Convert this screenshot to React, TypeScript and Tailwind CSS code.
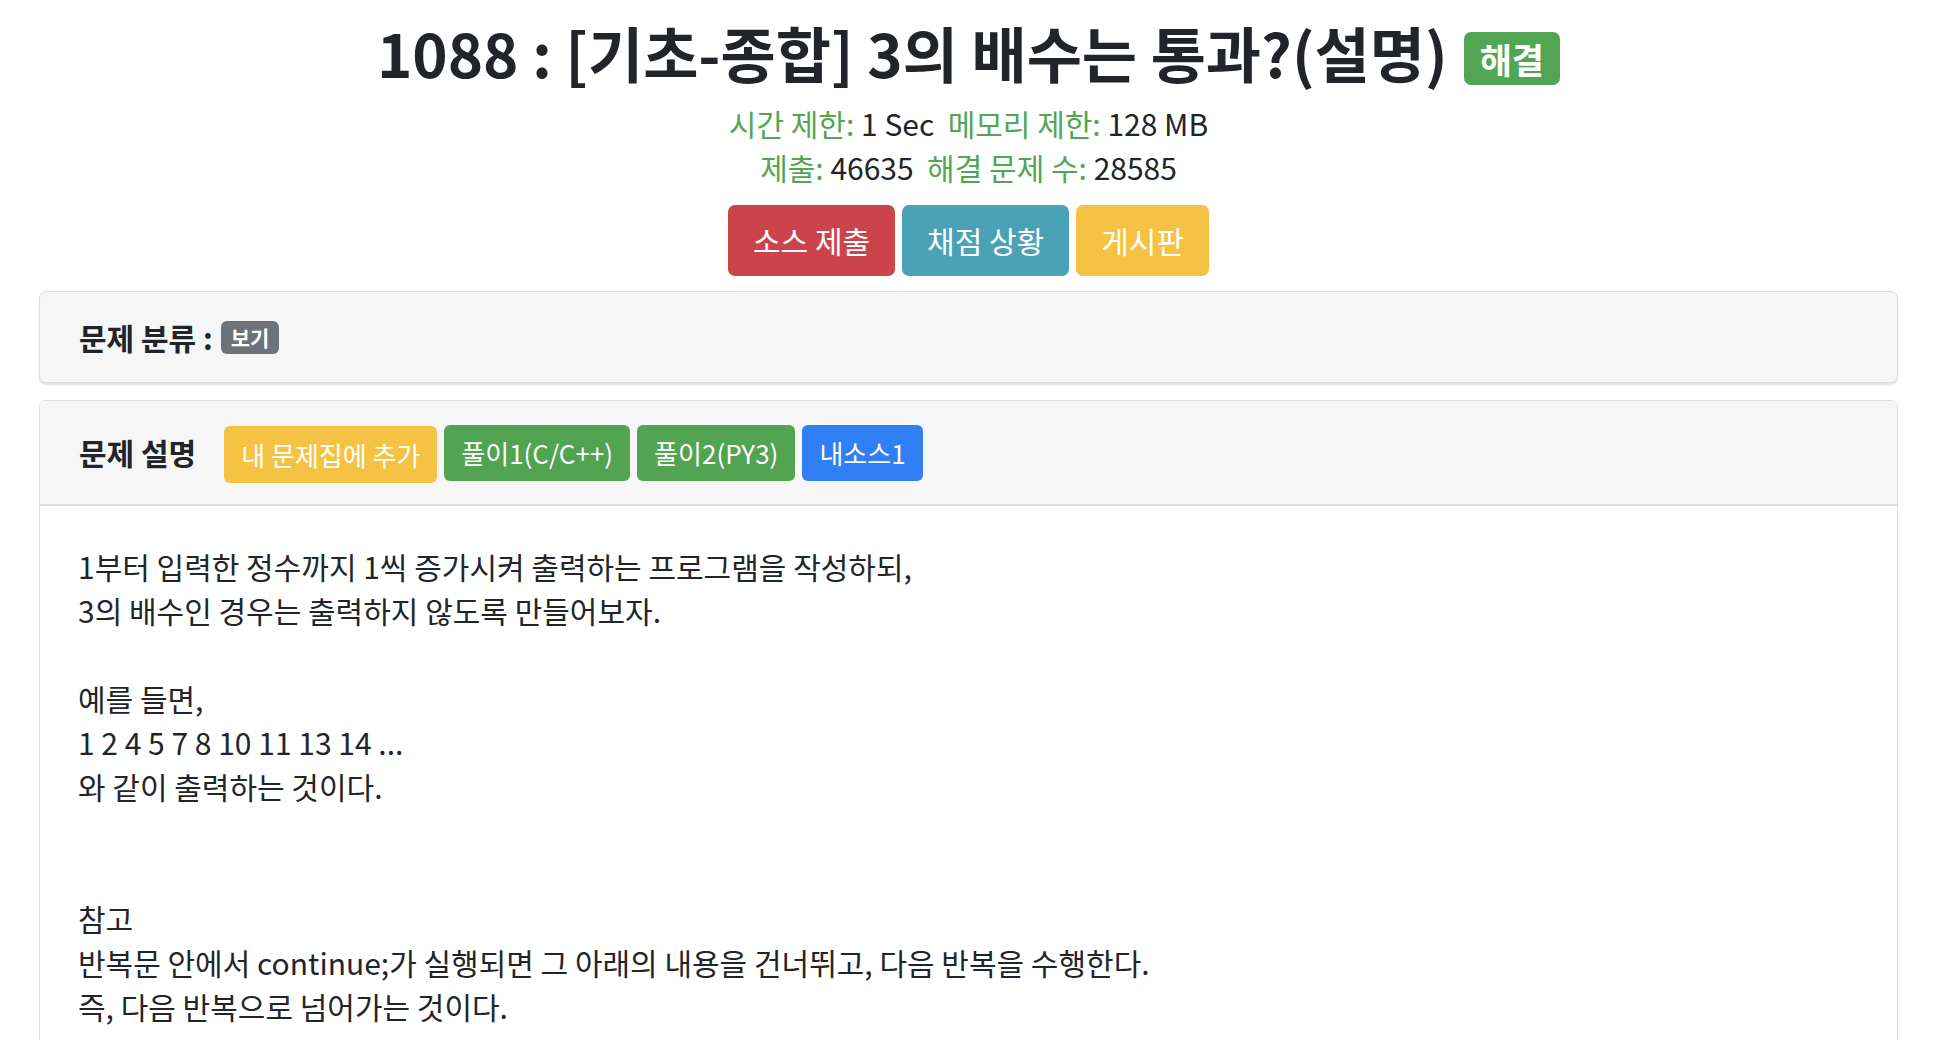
const font = { fontFamily: '"Noto Sans CJK KR", "Noto Sans", sans-serif' };

function Meta({ label, value }: { label: string; value: string }) {
  return (
    <span>
      <span className="text-[#52a552]">{label}</span> {value}
    </span>
  );
}

export default function App() {
  return (
    <div
      style={font}
      className="w-[1937px] px-[39px] bg-white text-[#212529] min-h-[1100px]"
    >
      {/* title */}
      <div className="flex items-center justify-center pt-[16px]">
        <h1 className="text-[60px] font-bold leading-[72px]">
          1088 : [기초-종합] 3의 배수는 통과?(설명)
        </h1>
        <span className="ml-[16px] mt-[12px] rounded-[7px] bg-[#52a552] px-[16px] text-[35px] font-bold leading-[53px] text-white">
          해결
        </span>
      </div>

      {/* limits */}
      <div className="mt-[13px] text-center text-[30px] leading-[44px]">
        <div>
          <Meta label="시간 제한:" value="1 Sec" />
          &nbsp; <Meta label="메모리 제한:" value="128 MB" />
        </div>
        <div>
          <Meta label="제출:" value="46635" />
          &nbsp; <Meta label="해결 문제 수:" value="28585" />
        </div>
      </div>

      <div className="mt-[16px] flex justify-center gap-[7px]">
        <button className="h-[71px] rounded-[7px] bg-[#cc444b] px-[25px] text-[30px] text-white">
          소스 제출
        </button>
        <button className="h-[71px] rounded-[7px] bg-[#4ba2b7] px-[25px] text-[30px] text-white">
          채점 상황
        </button>
        <button className="h-[71px] rounded-[7px] bg-[#f5c343] px-[25px] text-[30px] text-white">
          게시판
        </button>
      </div>

      {/* category card */}
      <div className="mt-[15px] flex h-[92px] items-center rounded-[7px] border border-[#dddddd] bg-[#f6f6f6] px-[39px] shadow-[0_2px_2px_rgba(0,0,0,0.12)]">
        <span className="text-[30px] font-bold">문제 분류 :</span>
        <span className="ml-[8px] rounded-[6px] bg-[#6c737b] px-[10px] text-[21px] font-bold leading-[33px] text-white">
          보기
        </span>
      </div>

      {/* description card */}
      <div className="mt-[17px] rounded-t-[7px] border border-[#dddddd]">
        <div className="flex h-[105px] items-center border-b-2 border-[#dedede] bg-[#f6f6f6] px-[39px] rounded-t-[7px]">
          <span className="text-[30px] font-bold">문제 설명</span>
          <div className="ml-[28px] flex items-center gap-[7px]">
            <button className="mt-[4px] h-[57px] rounded-[6px] bg-[#f5c343] px-[17px] text-[26px] text-white">
              내 문제집에 추가
            </button>
            <button className="h-[56px] rounded-[6px] bg-[#52a452] px-[17px] text-[26px] text-white">
              풀이1(C/C++)
            </button>
            <button className="h-[56px] rounded-[6px] bg-[#52a452] px-[17px] text-[26px] text-white">
              풀이2(PY3)
            </button>
            <button className="h-[56px] rounded-[6px] bg-[#317ff5] px-[17px] text-[26px] text-white">
              내소스1
            </button>
          </div>
        </div>
        <div className="px-[38px] pt-[38px] pb-[80px] text-[30px] leading-[44px]">
          <p>1부터 입력한 정수까지 1씩 증가시켜 출력하는 프로그램을 작성하되,</p>
          <p>3의 배수인 경우는 출력하지 않도록 만들어보자.</p>
          <p>&nbsp;</p>
          <p>예를 들면,</p>
          <p>1 2 4 5 7 8 10 11 13 14 ...</p>
          <p>와 같이 출력하는 것이다.</p>
          <p>&nbsp;</p>
          <p>&nbsp;</p>
          <p>참고</p>
          <p>반복문 안에서 continue;가 실행되면 그 아래의 내용을 건너뛰고, 다음 반복을 수행한다.</p>
          <p>즉, 다음 반복으로 넘어가는 것이다.</p>
        </div>
      </div>
    </div>
  );
}
